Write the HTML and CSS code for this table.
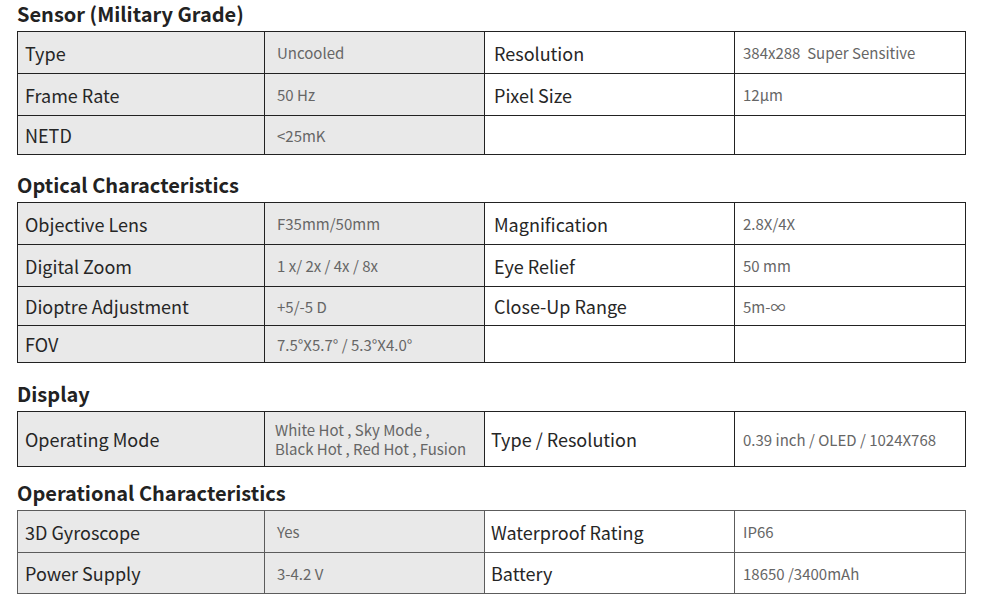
FILE: index.html
```
<!DOCTYPE html>
<html lang="en">
<head>
<meta charset="utf-8">
<title>Specifications</title>
<link rel="stylesheet" href="styles.css">
</head>
<body>
<div class="page">
  <h2 class="sec-title first">Sensor (Military Grade)</h2>
  <table class="spec">
    <colgroup><col class="c1"><col class="c2"><col class="c3"><col class="c4"></colgroup>
    <tr class="r42"><td class="lab">Type</td><td class="val">Uncooled</td><td class="lab2">Resolution</td><td class="val2">384x288&nbsp; Super Sensitive</td></tr>
    <tr class="r42"><td class="lab">Frame Rate</td><td class="val">50 Hz</td><td class="lab2">Pixel Size</td><td class="val2">12μm</td></tr>
    <tr class="r39"><td class="lab">NETD</td><td class="val">&lt;25mK</td><td class="lab2"></td><td class="val2"></td></tr>
  </table>

  <h2 class="sec-title">Optical Characteristics</h2>
  <table class="spec">
    <colgroup><col class="c1"><col class="c2"><col class="c3"><col class="c4"></colgroup>
    <tr class="r42"><td class="lab">Objective Lens</td><td class="val">F35mm/50mm</td><td class="lab2">Magnification</td><td class="val2">2.8X/4X</td></tr>
    <tr class="r42"><td class="lab">Digital Zoom</td><td class="val">1 x/ 2x / 4x / 8x</td><td class="lab2">Eye Relief</td><td class="val2">50 mm</td></tr>
    <tr class="r39"><td class="lab">Dioptre Adjustment</td><td class="val">+5/-5 D</td><td class="lab2">Close-Up Range</td><td class="val2">5m-∞</td></tr>
    <tr class="r37"><td class="lab">FOV</td><td class="val">7.5°X5.7° / 5.3°X4.0°</td><td class="lab2"></td><td class="val2"></td></tr>
  </table>

  <h2 class="sec-title mid">Display</h2>
  <table class="spec">
    <colgroup><col class="c1"><col class="c2"><col class="c3"><col class="c4"></colgroup>
    <tr class="r55"><td class="lab">Operating Mode</td><td class="val multi">White Hot , Sky Mode ,<br>Black Hot , Red Hot , Fusion</td><td class="lab2 tight">Type / Resolution</td><td class="val2">0.39 inch / OLED / 1024X768</td></tr>
  </table>

  <h2 class="sec-title close">Operational Characteristics</h2>
  <table class="spec light">
    <colgroup><col class="c1"><col class="c2"><col class="c3"><col class="c4"></colgroup>
    <tr class="r42"><td class="lab">3D Gyroscope</td><td class="val">Yes</td><td class="lab2 tight">Waterproof Rating</td><td class="val2">IP66</td></tr>
    <tr class="r41"><td class="lab">Power Supply</td><td class="val">3-4.2 V</td><td class="lab2 tight">Battery</td><td class="val2">18650 /3400mAh</td></tr>
  </table>
</div>
</body>
</html>
```
FILE: styles.css
```
html, body {
  margin: 0;
  padding: 0;
  background: #ffffff;
}
body {
  font-family: "Noto Sans CJK SC", "Noto Sans", sans-serif;
  color: #333333;
}
.page {
  padding: 0 16px 0 17px;
  width: 948px;
}
.sec-title {
  margin: 16px 0 3px 0;
  font-size: 20px;
  line-height: 28px;
  font-weight: 700;
  color: #222222;
}
.sec-title.first {
  margin-top: 0;
  margin-bottom: 3px;
}
.sec-title.mid {
  margin-top: 17px;
}
.sec-title.close {
  margin-top: 12px;
  margin-bottom: 3px;
}
.spec {
  width: 948px;
  border-collapse: collapse;
  table-layout: fixed;
}
.spec td {
  border: 1px solid #222222;
  padding: 0;
  vertical-align: middle;
  white-space: nowrap;
}
.spec.light td {
  border-color: #5c5c5c;
}
.c1 { width: 247px; }
.c2 { width: 220px; }
.c3 { width: 250px; }
.c4 { width: 231px; }
.r42 { height: 42px; }
.r41 { height: 41px; }
.r39 { height: 39px; }
.r37 { height: 37px; }
.r55 { height: 55px; }
.spec .lab, .spec .val {
  background: #e9e9e9;
}
.spec .lab {
  padding-left: 7px;
  font-size: 18px;
  font-weight: 400;
  color: #262626;
}
.spec .lab2 {
  padding-left: 9px;
  font-size: 18px;
  font-weight: 400;
  color: #262626;
}
.spec .lab2.tight {
  padding-left: 6px;
}
.spec .val {
  padding-left: 12px;
  font-size: 15px;
  color: #666666;
}
.spec .val.multi {
  padding-left: 10px;
  line-height: 19px;
}
.spec .val2 {
  padding-left: 8px;
  font-size: 15px;
  color: #666666;
}
```
